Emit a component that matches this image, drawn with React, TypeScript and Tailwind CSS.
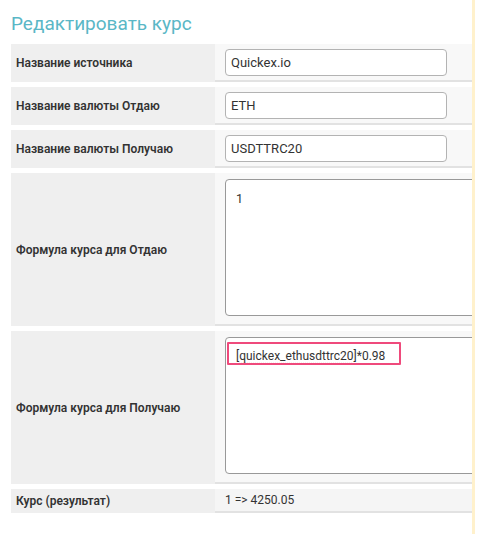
const rows = [
  { label: "Название источника", value: "Quickex.io", kind: "input" },
  { label: "Название валюты Отдаю", value: "ETH", kind: "input" },
  { label: "Название валюты Получаю", value: "USDTTRC20", kind: "input" },
];

function Label({ text, h }: { text: string; h: string }) {
  return (
    <div className={`bg-[#efefef] ${h} flex items-center pl-[5px] text-[12px] font-semibold text-[#333]`}>
      {text}
    </div>
  );
}

export default function App() {
  return (
    <div className="flex min-h-[534px] bg-white font-['Roboto',sans-serif]">
      <div className="w-[472px] pl-[11px]">
        <h1 className="pt-[13px] pb-[9px] text-[19px] leading-[22px] text-[#5ab7c6]">Редактировать курс</h1>
        <div className="grid grid-cols-[204px_1fr] gap-y-[5px]">
          {rows.map((r) => (
            <div key={r.label} className="contents">
              <Label text={r.label} h="h-[38px]" />
              <div className="h-[38px] bg-[#f8f8f8] border-b-[2px] border-[#e2e2e2] pl-[10px] pt-[5px]">
                <div className="w-[222px] h-[27px] rounded-[4px] border border-[#b3b3b3] bg-white flex items-center pl-[5px] text-[13px] text-[#333]">
                  {r.value}
                </div>
              </div>
            </div>
          ))}

          <Label text="Формула курса для Отдаю" h="h-[153px]" />
          <div className="h-[153px] bg-[#f8f8f8] border-b-[2px] border-[#e2e2e2] pl-[10px] pt-[6px] overflow-hidden">
            <div className="w-[300px] h-[137px] rounded-[4px] border border-[#999] bg-white px-[10px] pt-[10px] text-[12.5px] text-[#333]">
              1
            </div>
          </div>

          <Label text="Формула курса для Получаю" h="h-[153px]" />
          <div className="h-[153px] bg-[#f8f8f8] border-b-[2px] border-[#e2e2e2] pl-[10px] pt-[6px] overflow-hidden">
            <div className="relative w-[300px] h-[137px] rounded-[4px] border border-[#999] bg-white px-[10px] pt-[9px] text-[12px] text-[#333]">
              <span>
                [
                <span className="underline decoration-dotted decoration-[#e25c5c] underline-offset-[3px]">quickex_ethusdttrc20</span>
                ]*0.98
              </span>
              <div className="absolute left-[1px] top-[4px] w-[174px] h-[23px] border-[2px] border-[#ef4a7c] rounded-[1px]" />
            </div>
          </div>

          <Label text="Курс (результат)" h="h-[24px]" />
          <div className="h-[24px] bg-[#f5f5f5] border-b-[2px] border-[#e2e2e2] pl-[10px] flex items-center text-[12px] text-[#333]">
            1 =&gt; 4250.05
          </div>
        </div>
      </div>
      <div className="w-[3px] bg-[#fff1cc]" />
      <div className="flex-1" />
    </div>
  );
}
